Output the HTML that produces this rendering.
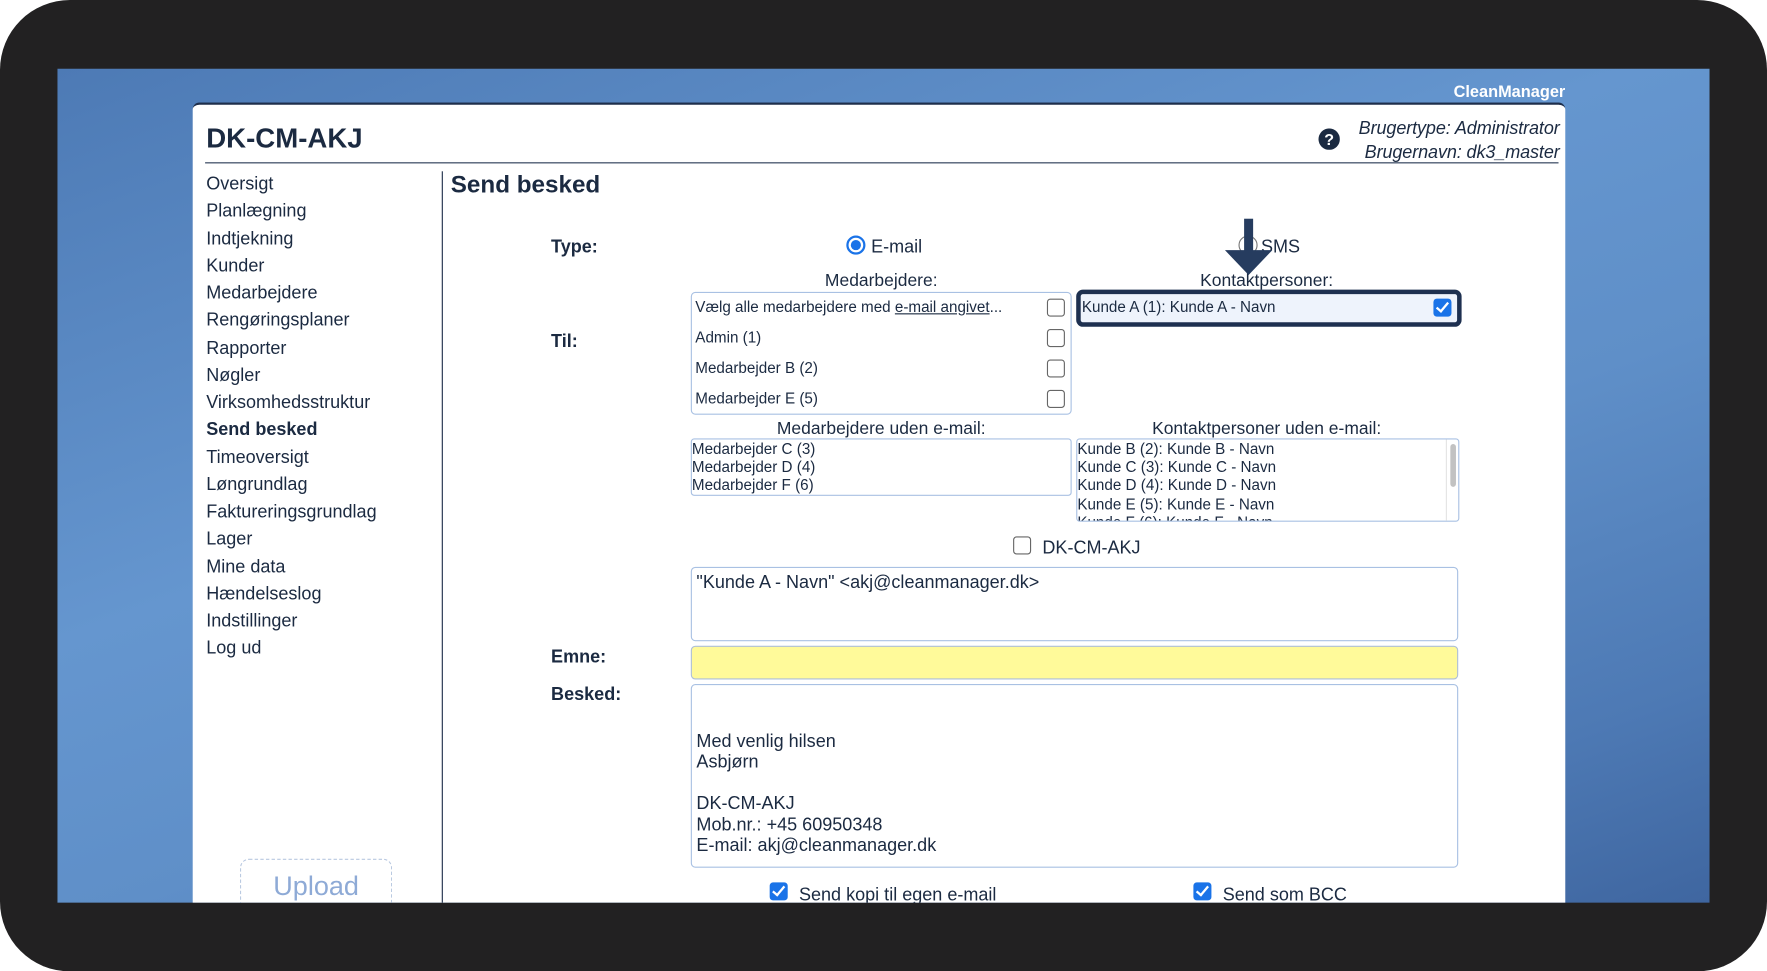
<!DOCTYPE html>
<html><head><meta charset="utf-8"><style>
*{margin:0;padding:0;box-sizing:border-box}
html,body{width:1767px;height:971px;overflow:hidden;background:#fff}
#w{position:absolute;left:0;top:0;width:1568px;height:862px;transform:scale(1.12691);transform-origin:0 0;font-family:"Liberation Sans",sans-serif;color:#1b2a41}
.frame{position:absolute;left:0;top:0;width:1568px;height:862px;background:#222122;border-radius:62px}
.screen{position:absolute;left:51px;top:61px;width:1466px;height:740px;background:linear-gradient(160deg,#4d7ab5 0%,#6596cf 40%,#5f8fc8 60%,#4d79b4 85%,#3f66a0 100%);overflow:hidden}
.cm{position:absolute;right:128px;top:13px;color:#fff;font-weight:bold;font-size:14.5px}
.panel{position:absolute;left:120px;top:30px;width:1218px;height:720px;background:#fff;border-top:2px solid #1e2e4a;border-radius:6px 6px 0 0}
.a{position:absolute;white-space:nowrap}
.nav{font-size:16px;line-height:24.25px}
.box{position:absolute;border:1px solid #a9c1e3;border-radius:4px;background:#fff}
.cb{position:absolute;width:16px;height:16px;border:1.5px solid #666;border-radius:3px;background:#fff}
.cbc{position:absolute;width:16px;height:16px;border-radius:3px;background:#1a73e8}
.cbc:after{content:"";position:absolute;left:5px;top:1px;width:4px;height:9px;border:solid #fff;border-width:0 2px 2px 0;transform:rotate(40deg)}
.s{font-size:13.5px}
.lbl{font-weight:bold;font-size:16px}
</style></head><body><div id="w">
<div class="frame"></div>
<div class="screen">
<div class="cm">CleanManager</div>
<div class="panel">
<div class="a" style="left:12px;top:17px;font-size:24.5px;font-weight:bold">DK-CM-AKJ</div>
<svg class="a" style="left:999px;top:21px" width="19" height="19" viewBox="0 0 20 20"><circle cx="10" cy="10" r="10" fill="#1b2a41"/><text x="10" y="15.5" text-anchor="middle" fill="#fff" font-size="15" font-weight="bold" font-family="Liberation Sans">?</text></svg>
<div class="a" style="right:5px;top:12px;font-size:16px;font-style:italic;text-align:right;line-height:20.5px;letter-spacing:-0.1px">Brugertype: Administrator<br>Brugernavn: dk3_master</div>
<div class="a" style="left:11px;top:51px;width:1201px;height:1px;background:#2a3a55"></div>
<div class="a nav" style="left:12px;top:59px">Oversigt<br>Planlægning<br>Indtjekning<br>Kunder<br>Medarbejdere<br>Rengøringsplaner<br>Rapporter<br>Nøgler<br>Virksomhedsstruktur<br><b>Send besked</b><br>Timeoversigt<br>Løngrundlag<br>Faktureringsgrundlag<br>Lager<br>Mine data<br>Hændelseslog<br>Indstillinger<br>Log ud</div>
<div class="a" style="left:42px;top:669px;width:135px;height:60px;border:1px dashed #b8c8e0;border-radius:8px;color:#8eaad6;font-size:24px;text-align:center;padding-top:10px">Upload</div>
<div class="a" style="left:221px;top:59px;width:1px;height:670px;background:#1e2e4a"></div>
<div class="a" style="left:229px;top:59px;font-size:21.5px;font-weight:bold">Send besked</div>
<div class="a lbl" style="left:318px;top:118px">Type:</div>
<div class="a" style="left:580px;top:116px;width:17px;height:17px;border-radius:50%;border:2px solid #1a73e8;background:#fff"><div style="position:absolute;left:2px;top:2px;width:9px;height:9px;border-radius:50%;background:#1a73e8"></div></div>
<div class="a" style="left:602px;top:118px;font-size:16px">E-mail</div>
<div class="a" style="left:928px;top:116px;width:17px;height:17px;border-radius:50%;border:1.5px solid #777"></div>
<div class="a" style="left:948px;top:118px;font-size:16px">SMS</div>
<div class="a" style="left:611px;top:148px;width:0;font-size:15.5px"><span style="position:absolute;transform:translateX(-50%)">Medarbejdere:</span></div>
<div class="a" style="left:953px;top:148px;width:0;font-size:15.5px"><span style="position:absolute;transform:translateX(-50%)">Kontaktpersoner:</span></div>
<svg class="a" style="left:915px;top:101px" width="44" height="50" viewBox="0 0 44 50"><rect x="18" y="0" width="8" height="29" fill="#263c5f"/><polygon points="1,28 43,28 22,50" fill="#263c5f"/></svg>
<div class="box" style="left:442px;top:166px;width:338px;height:109px"></div>
<div class="a s" style="left:446px;top:172px">Vælg alle medarbejdere med <u>e-mail angivet</u>...</div>
<div class="a s" style="left:446px;top:199px">Admin (1)</div>
<div class="a s" style="left:446px;top:226px">Medarbejder B (2)</div>
<div class="a s" style="left:446px;top:253px">Medarbejder E (5)</div>
<div class="cb" style="left:758px;top:172px"></div>
<div class="cb" style="left:758px;top:199px"></div>
<div class="cb" style="left:758px;top:226px"></div>
<div class="cb" style="left:758px;top:253px"></div>
<div class="a" style="left:784px;top:164px;width:342px;height:33px;border:4px solid #1e3050;border-radius:6px;background:#eef3fc"></div>
<div class="a s" style="left:789px;top:172px">Kunde A (1): Kunde A - Navn</div>
<div class="cbc" style="left:1101px;top:172px"></div>
<div class="a lbl" style="left:318px;top:202px">Til:</div>
<div class="a" style="left:611px;top:279px;width:0;font-size:15.5px"><span style="position:absolute;transform:translateX(-50%);white-space:nowrap">Medarbejdere uden e-mail:</span></div>
<div class="a" style="left:953px;top:279px;width:0;font-size:15.5px"><span style="position:absolute;transform:translateX(-50%);white-space:nowrap">Kontaktpersoner uden e-mail:</span></div>
<div class="box" style="left:442px;top:296px;width:338px;height:51px;border-radius:3px"></div>
<div class="a s" style="left:443px;top:298px;line-height:16.2px">Medarbejder C (3)<br>Medarbejder D (4)<br>Medarbejder F (6)</div>
<div class="box" style="left:784px;top:296px;width:340px;height:74px;border-radius:3px;overflow:hidden"><div class="s" style="position:absolute;left:0;top:1px;line-height:16.2px;white-space:nowrap">Kunde B (2): Kunde B - Navn<br>Kunde C (3): Kunde C - Navn<br>Kunde D (4): Kunde D - Navn<br>Kunde E (5): Kunde E - Navn<br>Kunde F (6): Kunde F - Navn</div><div style="position:absolute;right:2px;top:4px;width:5px;height:38px;background:#c2c2c2;border-radius:3px"></div><div style="position:absolute;right:10px;top:0;width:1px;height:74px;background:#e4e4e4"></div></div>
<div class="cb" style="left:728px;top:383px"></div>
<div class="a" style="left:754px;top:385px;font-size:16px">DK-CM-AKJ</div>
<div class="box" style="left:442px;top:410px;width:681px;height:66px"></div>
<div class="a" style="left:447px;top:416px;font-size:16px">"Kunde A - Navn" &lt;akj@cleanmanager.dk&gt;</div>
<div class="a lbl" style="left:318px;top:482px">Emne:</div>
<div class="box" style="left:442px;top:480px;width:681px;height:30px;background:#fffa9a;border-color:#aebfd8"></div>
<div class="a lbl" style="left:318px;top:515px">Besked:</div>
<div class="box" style="left:442px;top:514px;width:681px;height:163px"></div>
<div class="a" style="left:447px;top:557px;font-size:16px;line-height:18.4px">Med venlig hilsen<br>Asbjørn<br><br>DK-CM-AKJ<br>Mob.nr.: +45 60950348<br>E-mail: akj@cleanmanager.dk</div>
<div class="cbc" style="left:512px;top:690px"></div>
<div class="a" style="left:538px;top:693px;font-size:16px">Send kopi til egen e-mail</div>
<div class="cbc" style="left:888px;top:690px"></div>
<div class="a" style="left:914px;top:693px;font-size:16px">Send som BCC</div>
</div>
</div>
</div></body></html>
